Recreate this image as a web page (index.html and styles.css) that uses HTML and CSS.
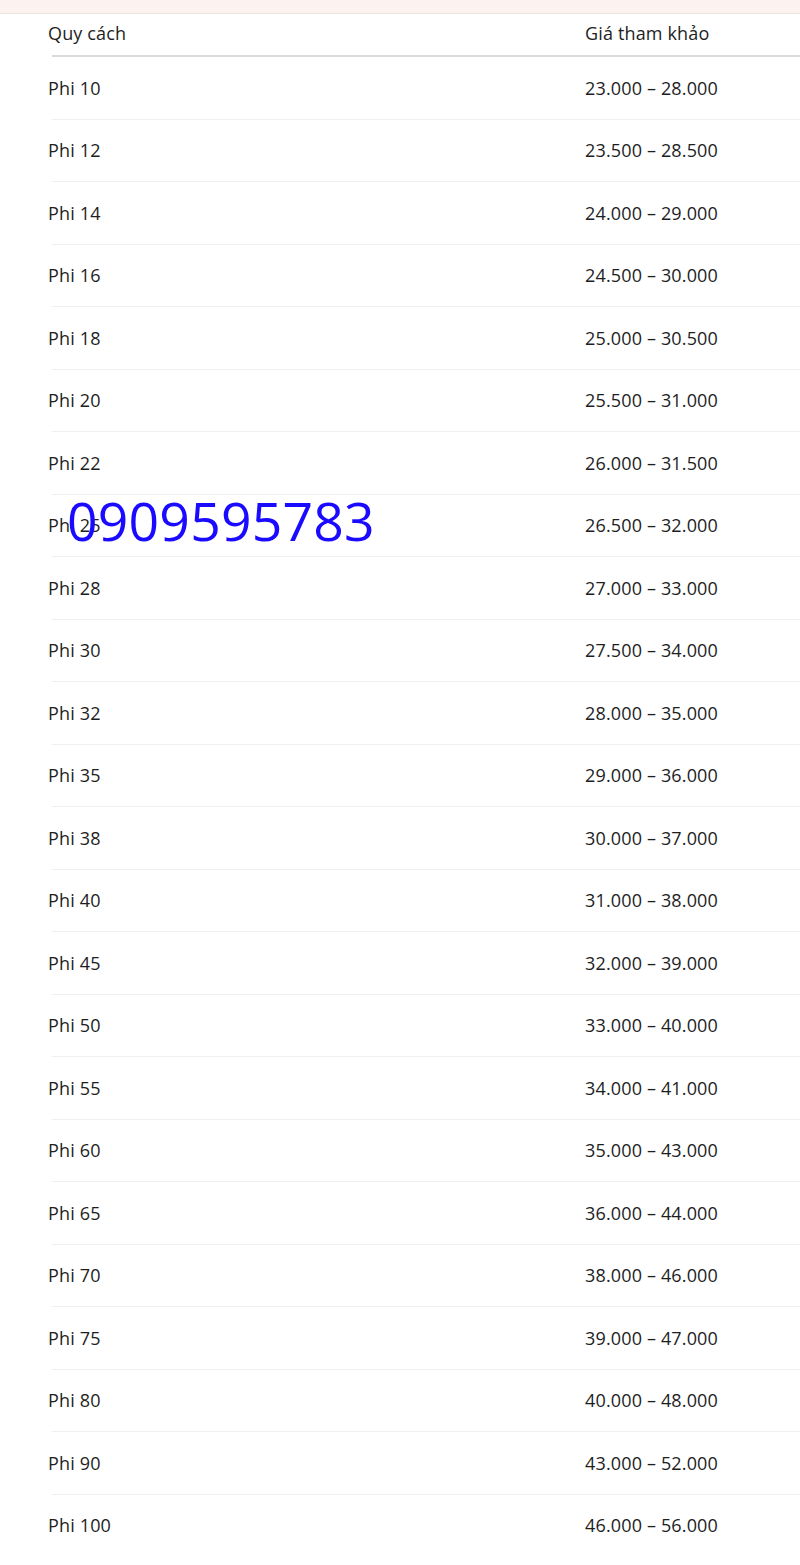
FILE: index.html
```html
<!DOCTYPE html>
<html lang="vi">
<head>
<meta charset="utf-8">
<title>Bảng giá</title>
<link rel="stylesheet" href="styles.css">
</head>
<body>
<div class="topbar"></div>
<div class="table">
  <div class="row head"><span class="name">Quy cách</span><span class="price">Giá tham khảo</span></div>
  <div class="row"><span class="name">Phi 10</span><span class="price">23.000 – 28.000</span></div>
  <div class="row"><span class="name">Phi 12</span><span class="price">23.500 – 28.500</span></div>
  <div class="row"><span class="name">Phi 14</span><span class="price">24.000 – 29.000</span></div>
  <div class="row"><span class="name">Phi 16</span><span class="price">24.500 – 30.000</span></div>
  <div class="row"><span class="name">Phi 18</span><span class="price">25.000 – 30.500</span></div>
  <div class="row"><span class="name">Phi 20</span><span class="price">25.500 – 31.000</span></div>
  <div class="row"><span class="name">Phi 22</span><span class="price">26.000 – 31.500</span></div>
  <div class="row"><span class="name">Phi 25</span><span class="price">26.500 – 32.000</span></div>
  <div class="row"><span class="name">Phi 28</span><span class="price">27.000 – 33.000</span></div>
  <div class="row"><span class="name">Phi 30</span><span class="price">27.500 – 34.000</span></div>
  <div class="row"><span class="name">Phi 32</span><span class="price">28.000 – 35.000</span></div>
  <div class="row"><span class="name">Phi 35</span><span class="price">29.000 – 36.000</span></div>
  <div class="row"><span class="name">Phi 38</span><span class="price">30.000 – 37.000</span></div>
  <div class="row"><span class="name">Phi 40</span><span class="price">31.000 – 38.000</span></div>
  <div class="row"><span class="name">Phi 45</span><span class="price">32.000 – 39.000</span></div>
  <div class="row"><span class="name">Phi 50</span><span class="price">33.000 – 40.000</span></div>
  <div class="row"><span class="name">Phi 55</span><span class="price">34.000 – 41.000</span></div>
  <div class="row"><span class="name">Phi 60</span><span class="price">35.000 – 43.000</span></div>
  <div class="row"><span class="name">Phi 65</span><span class="price">36.000 – 44.000</span></div>
  <div class="row"><span class="name">Phi 70</span><span class="price">38.000 – 46.000</span></div>
  <div class="row"><span class="name">Phi 75</span><span class="price">39.000 – 47.000</span></div>
  <div class="row"><span class="name">Phi 80</span><span class="price">40.000 – 48.000</span></div>
  <div class="row"><span class="name">Phi 90</span><span class="price">43.000 – 52.000</span></div>
  <div class="row last"><span class="name">Phi 100</span><span class="price">46.000 – 56.000</span></div>
</div>
<div class="phone">0909595783</div>
</body>
</html>
```
FILE: styles.css
```css
html, body {
  margin: 0;
  padding: 0;
  background: #ffffff;
}
body {
  position: relative;
  font-family: "Open Sans", "Liberation Sans", sans-serif;
  font-size: 18px;
  color: #1e1e1e;
  overflow: hidden;
  height: 1565px;
}
.topbar {
  height: 13px;
  background: #fcf3f1;
  border-bottom: 1px solid #ebe2e0;
}
.table {
  margin-left: 52px;
}
.row {
  display: grid;
  grid-template-columns: 533px 1fr;
  align-items: center;
  height: 61.5px;
  border-bottom: 1px solid #efefef;
  letter-spacing: 0.15px;
  font-weight: 500;
}
.row.head {
  height: 41px;
  border-bottom: 2px solid #dadada;
}
.row.head span {
  position: relative;
  top: -2px;
}
.row.last {
  border-bottom: none;
}
.name {
  margin-left: -4px;
}
.phone {
  position: absolute;
  left: 67px;
  top: 494px;
  font-family: "Open Sans", "Liberation Sans", sans-serif;
  font-size: 53.5px;
  line-height: 1;
  color: #1a0aff;
  letter-spacing: 0.2px;
}
```
